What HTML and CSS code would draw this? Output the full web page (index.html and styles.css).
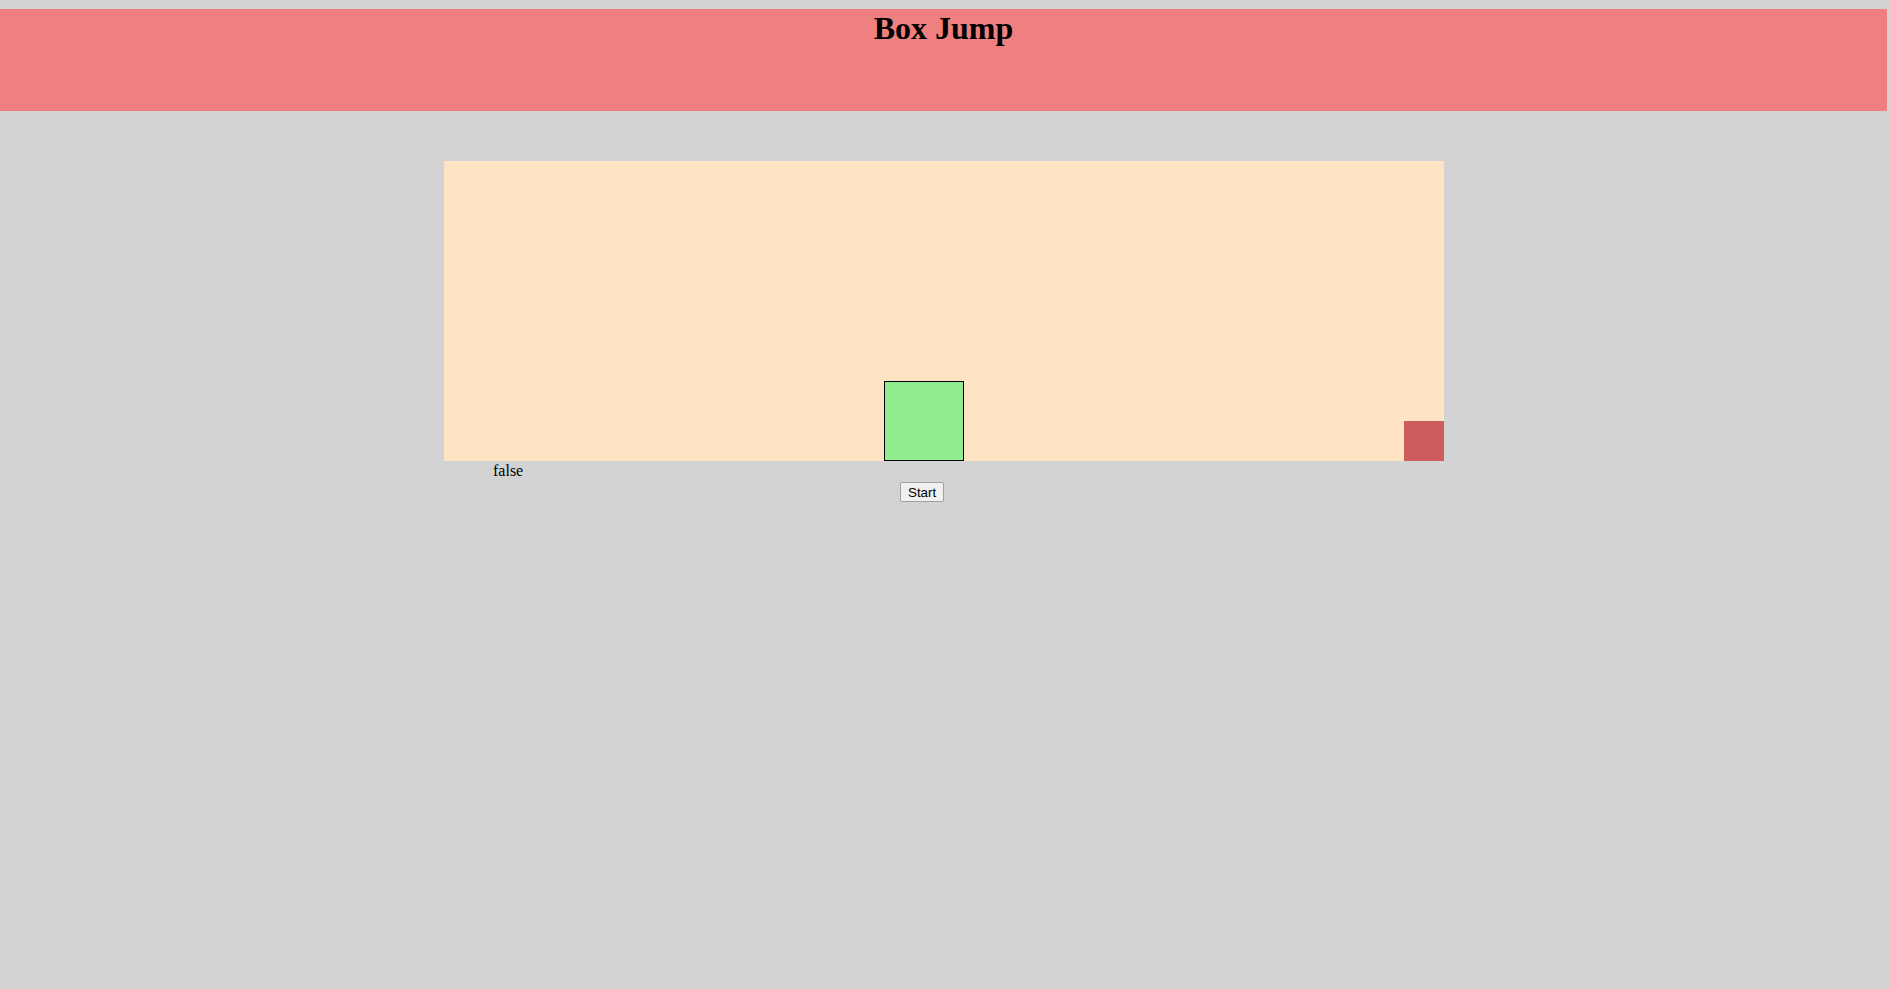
FILE: index.html
```html
<!DOCTYPE html>
<html>
<head>
<meta charset="utf-8">
<title>Box Jump</title>
<link rel="stylesheet" href="styles.css">
</head>
<body>
<header class="header">
  <h1 class="title">Box Jump</h1>
</header>
<main class="game">
  <div class="canvas">
    <div class="player"></div>
    <div class="obstacle"></div>
  </div>
  <div class="status">false</div>
  <div class="controls">
    <button class="start-btn">Start</button>
  </div>
</main>
</body>
</html>
```
FILE: styles.css
```css
html, body {
  margin: 0;
  padding: 0;
}
body {
  background: #d3d3d3;
  font-family: "Liberation Serif", "Times New Roman", serif;
  font-size: 16px;
  color: #000;
}
.header {
  margin-top: 9px;
  width: 1887px;
  height: 102px;
  background: #f08080;
}
.title {
  margin: 0;
  text-align: center;
  font-size: 32px;
  font-weight: bold;
  line-height: 38px;
}
.game {
  margin: 50px 0 0 444px;
  width: 1000px;
}
.canvas {
  position: relative;
  width: 1000px;
  height: 300px;
  background: #ffe4c4;
}
.player {
  position: absolute;
  left: 440px;
  bottom: 0;
  width: 80px;
  height: 80px;
  box-sizing: border-box;
  border: 1px solid #000;
  background: #90ee90;
}
.obstacle {
  position: absolute;
  right: 0;
  bottom: 0;
  width: 40px;
  height: 40px;
  background: #cd5c5c;
}
.status {
  padding-left: 49px;
  line-height: 19px;
}
.controls {
  display: flex;
  padding-left: 456px;
  margin-top: 2px;
}
.start-btn {
  font-family: "Liberation Sans", Arial, sans-serif;
  font-size: 13.33px;
  height: 20px;
  padding: 0 7px;
  border: 1px solid #a0a0a0;
  border-radius: 2px;
  background: #f0f0f0;
  color: #000;
}
```
